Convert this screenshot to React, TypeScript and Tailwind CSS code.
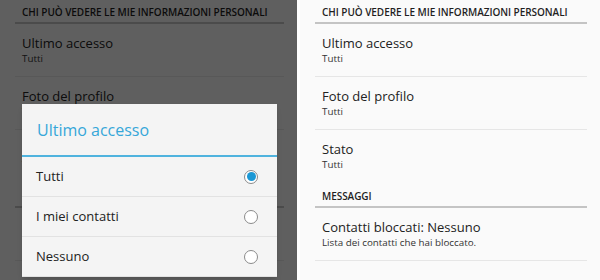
import React from 'react';

type Item = { title: string; sub: string; last?: boolean };

const Header = ({ label }: { label: string }) => (
  <div className="px-[7px] pb-[4px] text-[10px] font-semibold leading-[12px] tracking-[-0.05px] border-b-2 border-[#c4c4c4]">
    {label}
  </div>
);

const Row = ({ title, sub, last }: Item) => (
  <div className={`px-[7px] pt-[10px] pb-[11px] ${last ? '' : 'border-b border-[#e6e6e6]'}`}>
    <div className="text-[13px] leading-[18px] text-[#222]">{title}</div>
    <div className="mt-[1px] text-[9.8px] leading-[12px] text-[#333]">{sub}</div>
  </div>
);

const SettingsList = () => (
  <div className="flex flex-col pl-[15px] pr-[13px] pt-[6px] text-[#1f1f1f]">
    <Header label="CHI PUÒ VEDERE LE MIE INFORMAZIONI PERSONALI" />
    <Row title="Ultimo accesso" sub="Tutti" />
    <Row title="Foto del profilo" sub="Tutti" />
    <Row title="Stato" sub="Tutti" last />
    <div className="pt-[8px]">
      <Header label="MESSAGGI" />
    </div>
    <Row title="Contatti bloccati: Nessuno" sub="Lista dei contatti che hai bloccato." />
  </div>
);

const Radio = ({ checked }: { checked?: boolean }) => (
  <div className="flex h-[14px] w-[14px] items-center justify-center rounded-full border border-[#8a8a8a] bg-white">
    {checked && <div className="h-[9px] w-[9px] rounded-full bg-[#1b98d5]" />}
  </div>
);

const App = () => {
  const options = [
    { label: 'Tutti', checked: true },
    { label: 'I miei contatti' },
    { label: 'Nessuno' },
  ];

  return (
    <div className="flex h-[280px] w-[600px] overflow-hidden bg-white" style={{ fontFamily: '"Open Sans", "Liberation Sans", sans-serif' }}>
      {/* dimmed screen with dialog */}
      <div className="relative h-full w-[297px] bg-[#fafafa]">
        <SettingsList />
        <div className="absolute inset-0 bg-black/[0.62]" />
        <div className="absolute left-[22px] top-[104px] w-[255px] bg-[#f4f4f4] shadow-md">
          <div className="flex h-[51px] items-center px-[15px] text-[16px] text-[#36a7d9]">Ultimo accesso</div>
          <div className="h-[2px] bg-[#4fb3de]" />
          {options.map((o) => (
            <div key={o.label} className="flex h-[40px] items-center justify-between border-b border-[#e2e2e2] pl-[14px] pr-[19px]">
              <span className="text-[13px] text-[#222]">{o.label}</span>
              <Radio checked={o.checked} />
            </div>
          ))}
        </div>
      </div>

      {/* normal screen */}
      <div className="ml-[3px] h-full flex-1 bg-[#fafafa]">
        <SettingsList />
      </div>
    </div>
  );
};

export default App;
